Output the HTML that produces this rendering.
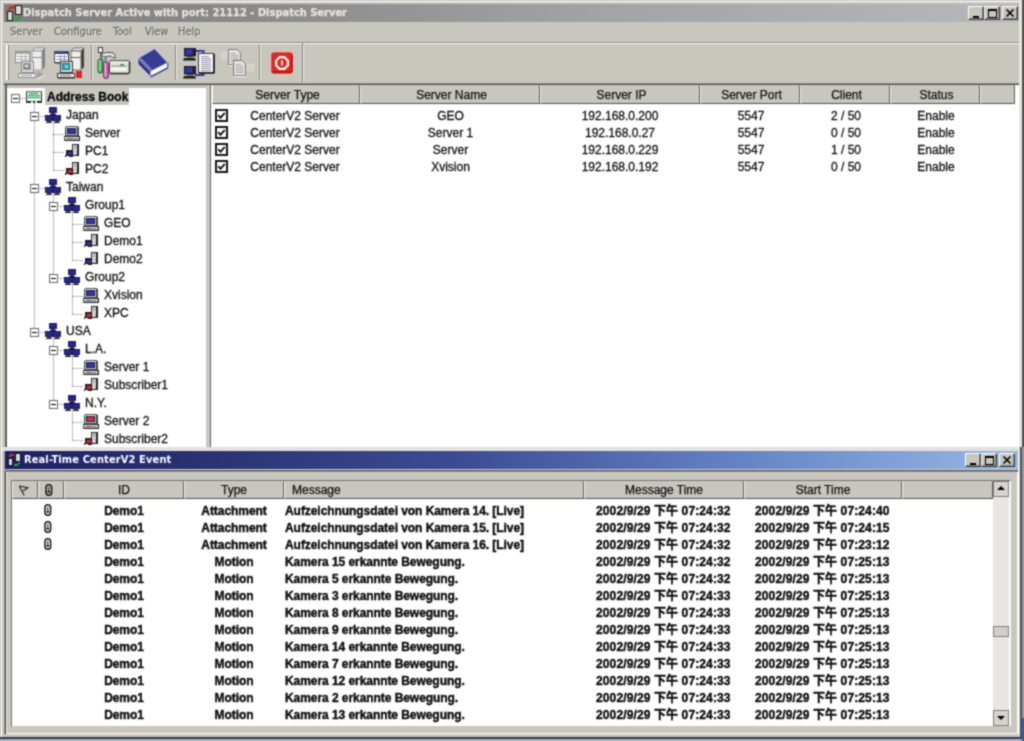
<!DOCTYPE html>
<html lang="en"><head><meta charset="utf-8"><title>Dispatch Server</title>
<style>
html,body{margin:0;padding:0}
body{width:1024px;height:741px;overflow:hidden;background:#c9c6be;font-family:"Liberation Sans",sans-serif;font-size:12px;color:#101010}
#win{position:absolute;left:0;top:0;width:1024px;height:741px;overflow:hidden;background:#c9c6be;filter:url(#soft)}
#win *{position:absolute}
#frame1{left:1px;top:1px;width:1019px;height:1px;background:#fff}
#frame2{left:1px;top:1px;width:1px;height:736px;background:#fff}
.ic{display:block;shape-rendering:crispEdges}
#title{left:4px;top:4px;width:1015px;height:18px;background:linear-gradient(90deg,#7e7e7e 0%,#8a8a8a 25%,#a2a3a5 58%,#b6b8bb 100%)}
#ttext{left:19px;top:1px;font:bold 11px "DejaVu Sans Condensed","DejaVu Sans","Liberation Sans",sans-serif;color:#e6e4de;-webkit-text-stroke:0.25px #e6e4de;white-space:nowrap;line-height:16px}
.wb{width:14px;height:12px;background:#c9c6be;border:1px solid;border-color:#fff #404040 #404040 #fff;box-shadow:inset -1px -1px 0 #808080}
.wb i{background:#000}
#menu{left:0;top:22px;width:1020px;height:19px}
#menu span{-webkit-text-stroke:0.3px #70706e;text-shadow:1px 1px 0 rgba(255,255,255,.55);top:3px;font:11px "DejaVu Sans Condensed","Liberation Sans",sans-serif;color:#70706e;white-space:nowrap;line-height:14px}
#msep{left:3px;top:41px;width:1016px;height:1px;background:#808080;border-bottom:1px solid #fff}
#treep{left:5px;top:85px;width:201px;height:362px;background:#fff;box-sizing:border-box;border:solid;border-width:0 0 0 2px;border-color:#505050 #fff #fff #606060;box-shadow:inset 0 3px 0 #c4c1ba}
#listp{left:210px;top:85px;width:809px;height:362px;background:#fff;box-sizing:border-box;border:solid;border-width:0 0 0 1px;border-color:#505050 #fff #fff #606060}
.vl{width:1px;background:repeating-linear-gradient(180deg,#7c7c7c 0 1px,#fff 1px 2px)}
.hl{height:1px;background:repeating-linear-gradient(90deg,#7c7c7c 0 1px,#fff 1px 2px)}
.bx{width:7px;height:7px;border:1px solid #686868;background:#fff}
.bx s{left:1px;top:3px;width:5px;height:1px;background:#000}
.sel{background:#c9c6be}
.tt{-webkit-text-stroke:0.3px #101010;white-space:nowrap;line-height:14px;font-size:12px;color:#101010}
.tb{font-weight:bold;color:#000}
.hd{-webkit-text-stroke:0.25px #101010;box-sizing:border-box;background:#c9c6be;border:1px solid;border-color:#cfccc5 #5c5c5c #505050 #f4f4f0;text-align:center;line-height:17px;font-size:12px;color:#101010;white-space:nowrap}
.lc{-webkit-text-stroke:0.3px #101010;text-align:center;line-height:16px;font-size:12px;white-space:nowrap;color:#101010}
#win2{left:4px;top:451px;width:1015px;height:285px;background:#c9c6be;box-sizing:border-box;border-left:1px solid #9a9894;border-bottom:2px solid #c9c6be;box-shadow:inset 1px 0 0 #404040,inset 2px 0 0 #f0f0ec,inset -2px -1px 0 #fafaf8}
#strip{left:2px;top:447px;width:1018px;height:4px;background:#e4e2dc}
#title2{left:5px;top:451px;width:1013px;height:18px;background:linear-gradient(90deg,#1c2068 0%,#2c3474 22%,#3c4c94 45%,#6888c8 75%,#98b8e4 100%);box-shadow:0 1px 0 #d0d0dc,0 2px 0 #585858,0 3px 0 #8c8a84}
#ttext2{letter-spacing:0.12px;left:19px;top:1px;font:bold 11px "DejaVu Sans Condensed","DejaVu Sans","Liberation Sans",sans-serif;color:#fff;white-space:nowrap;line-height:16px}
#evp{left:11px;top:480px;width:1000px;height:247px;background:#fff;box-sizing:border-box;border:1px solid;border-color:#707070 #f4f4f0 #c9c6be #707070}
.ec{-webkit-text-stroke:0.4px #0c0c0c;letter-spacing:-0.06px;text-align:center;line-height:16px;font-size:12px;font-weight:bold;white-space:nowrap;color:#0c0c0c}
.el{text-align:left}
.dt{letter-spacing:0.12px;font-family:"Liberation Sans","Noto Sans CJK TC",sans-serif}
#sb{left:993px;top:481px;width:16px;height:245px;background:#e8e6e2}
.sbb{left:0;width:14px;height:14px;background:#d6d4ce;border:1px solid #808080}
.sbt{left:0;top:145px;width:14px;height:9px;background:#d0cec8;border:1px solid #808080}
.up{left:3px;top:4px;width:0;height:0;border:4px solid transparent;border-top:0;border-bottom:4px solid #000}
.dn{left:3px;top:5px;width:0;height:0;border:4px solid transparent;border-bottom:0;border-top:4px solid #000}
.tsep{top:45px;width:1px;height:35px;background:#868480;border-right:1px solid #eeede9}
.ti{display:block}

#redge{left:1019px;top:0;width:5px;height:447px;background:linear-gradient(90deg,#e8e6e0 0 3px,#505050 3px 5px)}
#redge3{left:1019px;top:447px;width:5px;height:290px;background:linear-gradient(90deg,#dcdad4 0 1px,#505058 1px 3px,#9a9a9a 3px 5px)}
#redge2{left:1022px;top:718px;width:2px;height:23px;background:#3a5c98}
#bedge{left:0;top:737px;width:1022px;height:4px;background:linear-gradient(180deg,#2c3c54 0 2px,#a8b4c8 2px 4px)}

</style></head>
<body>
<svg width="0" height="0" style="position:absolute"><filter id="soft" x="0" y="0" width="100%" height="100%" color-interpolation-filters="sRGB"><feConvolveMatrix order="3" kernelMatrix="1 2 1 2 7 2 1 2 1" divisor="19" edgeMode="duplicate" preserveAlpha="true"/></filter></svg>
<div id="win">
<div id="frame1"></div><div id="frame2"></div>
<div id="title"><span id="ttext">Dispatch Server Active with port: 21112 - Dispatch Server</span></div>
<svg class="ic" style="left:6px;top:5px" width="17" height="16" viewBox="0 0 17 16"><rect x="1" y="6" width="6" height="10" fill="#181818"/><rect x="2" y="7" width="4" height="8" fill="#d8d8d8"/><rect x="9" y="0" width="7" height="10" fill="#181818"/><rect x="10" y="1" width="5" height="8" fill="#d8d8d8"/><path d="M2.500 5 L5 2.500 L8.500 2.500" stroke="#c83030" stroke-width="2.600" fill="none"/><path d="M8 14.200 L12 14.200 L15 11.200" stroke="#30a040" stroke-width="2.600" fill="none"/></svg>
<span class="wb" style="left:968px;top:6px"><i style="left:4px;top:9px;width:6px;height:2px"></i></span>
<span class="wb" style="left:984px;top:6px"><i style="left:3px;top:2px;width:9px;height:9px;background:none;border:1px solid #000;border-top-width:2px;box-sizing:border-box"></i></span>
<span class="wb" style="left:1002px;top:6px"><svg width="16" height="14" viewBox="0 0 16 14" style="position:absolute;left:-1px;top:-1px"><path d="M4.5 3.5 L11.5 10.5 M11.5 3.5 L4.5 10.5" stroke="#000" stroke-width="1.7"/></svg></span>
<div id="menu"><span style="left:10px">Server</span><span style="left:54px">Configure</span><span style="left:113px">Tool</span><span style="left:145px">View</span><span style="left:178px">Help</span></div>
<div id="tbtop" style="left:3px;top:42px;width:1016px;height:1px;background:#8c8a86"></div>
<div id="tbtop2" style="left:3px;top:43px;width:1016px;height:1px;background:#fff"></div>
<div id="tbbot" style="left:4px;top:83px;width:1016px;height:2px;background:linear-gradient(180deg,#8c8a86 0 1px,#4c4c4c 1px 2px)"></div>
<div id="grip" style="left:6px;top:45px;width:2px;height:35px;background:#fff;border-right:1px solid #808080"></div>
<i class="tsep" style="left:91px"></i><i class="tsep" style="left:175px"></i><i class="tsep" style="left:259px"></i>
<i class="tsep" style="left:302px;top:43px;height:39px"></i>
<!-- icon 1 : start service (disabled) -->
<svg class="ti" style="left:14px;top:47px" width="34" height="32" viewBox="0 0 34 32">
<polygon points="18,4 21,1 31,1 28,4" fill="#e8e8e8" stroke="#909090" stroke-width="1"/>
<polygon points="28,4 31,1 31,20 28,23" fill="#808080"/>
<rect x="18" y="4" width="10" height="19" fill="#ececec" stroke="#9c9c9c"/>
<path d="M18 10.5 H28" stroke="#909090"/>
<rect x="1.500" y="4.500" width="14" height="11" fill="#f4f4f4" stroke="#8c8c8c"/>
<rect x="2" y="5" width="13" height="2" fill="#a8a8a8"/>
<path d="M3 9.500 H14 M3 12.500 H14 M7.500 8 V14 M11.500 8 V14" stroke="#b0b0b0"/>
<rect x="7.500" y="14.500" width="12" height="11" fill="#e0e0e0" stroke="#8c8c8c"/>
<rect x="9" y="16" width="8" height="7" fill="#909090"/><rect x="11" y="18" width="3" height="2" fill="#e8e8e8"/>
<rect x="4.500" y="26.500" width="17" height="4" fill="#f0f0f0" stroke="#909090"/>
<path d="M7 28.500 H18" stroke="#a0a0a0"/>
<polygon points="23,24 31,28 23,32" fill="#a0a0a0"/><path d="M23 32 L31 28" stroke="#fff"/>
</svg>
<!-- icon 2 : stop service -->
<svg class="ti" style="left:53px;top:47px" width="34" height="32" viewBox="0 0 34 32">
<polygon points="18,4 21,1 31,1 28,4" fill="#f0f0f0" stroke="#707070" stroke-width="1"/>
<polygon points="28,4 31,1 31,20 28,23" fill="#404040"/>
<rect x="18" y="4" width="10" height="19" fill="#f0f0ec" stroke="#707070"/>
<path d="M18 10.500 H28" stroke="#606060"/>
<rect x="1.500" y="4.500" width="14" height="11" fill="#fff" stroke="#505050"/>
<rect x="2" y="5" width="13" height="2" fill="#3c3c9c"/>
<path d="M3 9.500 H14 M3 12.500 H14 M7.500 8 V14 M11.500 8 V14" stroke="#9090a0"/>
<path d="M15.500 5 V16 M2 16 H8" stroke="#303030"/>
<rect x="7.500" y="14.500" width="12" height="11" fill="#d8d8d8" stroke="#404040"/>
<rect x="9" y="16" width="8" height="7" fill="#187888"/><rect x="10" y="17" width="6" height="5" fill="#38a8b8"/><rect x="12" y="18" width="3" height="3" fill="#80d0dc"/>
<rect x="4.500" y="26.500" width="17" height="4" fill="#f0f0f0" stroke="#404040"/>
<path d="M7 28.500 H18" stroke="#808080"/><path d="M5 31 H22" stroke="#202020"/>
<rect x="23" y="24" width="6" height="7" fill="#e82020"/>
</svg>
<!-- icon 3 : tools -->
<svg class="ti" style="left:97px;top:47px" width="34" height="32" viewBox="0 0 34 32">
<rect x="12.500" y="13.500" width="20" height="13" rx="1.500" fill="#e4e4e0" stroke="#505050"/>
<path d="M13 26.500 H32 M32.500 15 V26" stroke="#282828" stroke-width="1.500"/>
<rect x="14" y="18" width="16" height="2" fill="#b8b8b8"/><rect x="14" y="21" width="16" height="2" fill="#f8f8f8"/>
<rect x="23" y="17" width="4" height="2" fill="#38a860"/>
<rect x="1.500" y="0.500" width="4" height="5" fill="#f8f8f8" stroke="#404040"/>
<rect x="3" y="6" width="2" height="6" fill="#707070"/>
<rect x="1" y="12" width="5" height="14" rx="2" fill="#48a868" stroke="#286038" stroke-width="1"/>
<rect x="2" y="13" width="1.500" height="11" fill="#a0e0b0"/>
<path d="M4 8 Q6 5.500 10 5.500 L15 5.500 Q18.500 6.500 18.500 11 L16 11 Q15 8.500 12 9 L7 10 Z" fill="#e8e8e8" stroke="#505050"/>
<rect x="7" y="10" width="3" height="6" fill="#909090"/>
<rect x="6.500" y="15" width="5" height="16.500" rx="2.200" fill="#c868b0" stroke="#703060" stroke-width="1"/>
<rect x="7.500" y="16" width="1.500" height="13" fill="#f0b0e0"/>
</svg>
<!-- icon 4 : address book -->
<svg class="ti" style="left:136px;top:47px" width="34" height="32" viewBox="0 0 34 32">
<polygon points="2,11.300 18.600,1.600 31.800,15.700 14.600,24.400" fill="#363c94" stroke="#e4e4f0" stroke-width="0.800"/>
<polygon points="2,11.300 14.600,24.400 14.600,29.800 2,17" fill="#30348c" stroke="#dcdcec" stroke-width="0.600"/>
<path d="M4 10.800 L15.500 22.600" stroke="#c8c8f0" stroke-width="1"/>
<polygon points="14.800,24.400 31.800,16 31.800,20.500 15.800,29" fill="#fcfcfc"/>
<path d="M14.600,29.800 L31.800,20.800" stroke="#30348c" stroke-width="1.400"/>
<path d="M31.800 15.700 V21" stroke="#30348c" stroke-width="1"/>
</svg>
<!-- icon 5 : connect -->
<svg class="ti" style="left:182px;top:47px" width="34" height="32" viewBox="0 0 34 32">
<path d="M13 4 H21.500 V8 M13 28 H21.500 V25" stroke="#3838a4" stroke-width="2" fill="none"/>
<rect x="2" y="1" width="12" height="8.500" fill="#20202c"/><rect x="3.500" y="2.200" width="7" height="5.600" fill="#3038a4"/>
<rect x="5" y="9" width="6" height="1.500" fill="#404040"/><polygon points="2,11 13,11 14,13.500 1,13.500" fill="#181818"/>
<rect x="2" y="19" width="12" height="8.500" fill="#20202c"/><rect x="3.500" y="20.200" width="7" height="5.600" fill="#3038a4"/>
<rect x="5" y="27" width="6" height="1.500" fill="#404040"/><polygon points="2,29 13,29 14,31.500 1,31.500" fill="#181818"/>
<rect x="16.500" y="6.500" width="15" height="19" fill="#fafafa" stroke="#404040"/>
<path d="M17 26 H32.500 M32 7 V26" stroke="#181818" stroke-width="1.600"/>
<path d="M19 9.500 H27 M19 11.500 H29 M19 13.500 H29 M19 15.500 H29 M19 17.500 H29 M19 19.500 H29 M19 21.500 H29 M19 23.500 H29" stroke="#9098a8"/>
</svg>
<!-- icon 6 : copy (disabled) -->
<svg class="ti" style="left:221px;top:47px" width="34" height="32" viewBox="0 0 34 32">
<path d="M0.500 5.500 H7 M0.500 7.500 H7 M0.500 9.500 H7 M0.500 11.500 H7" stroke="#f4f4f4" stroke-dasharray="1 1"/>
<path d="M26 17.500 H33 M26 19.500 H33 M26 21.500 H33 M26 23.500 H33" stroke="#f4f4f4" stroke-dasharray="1 1"/>
<polygon points="7.500,2.500 16,2.500 19.500,6 19.500,17.500 7.500,17.500" fill="#e4e4e0" stroke="#7c7c7c"/>
<path d="M9.500 6.500 H15 M9.500 8.500 H17.500 M9.500 10.500 H17.500 M9.500 12.500 H17.500 M9.500 14.500 H17.500" stroke="#a8a8a8"/>
<polygon points="12.500,13.500 21,13.500 24.500,17 24.500,28.500 12.500,28.500" fill="#e4e4e0" stroke="#7c7c7c"/>
<path d="M14.500 17.500 H20 M14.500 19.500 H22.500 M14.500 21.500 H22.500 M14.500 23.500 H22.500 M14.500 25.500 H22.500" stroke="#a8a8a8"/>
<path d="M8 18.500 H12 M13 29.500 H25" stroke="#f8f8f8"/>
</svg>
<!-- icon 7 : exit -->
<svg class="ti" style="left:270px;top:51px" width="24" height="24" viewBox="0 0 24 24">
<rect x="0.500" y="0.500" width="23" height="23" rx="3.500" fill="#f4c8c0"/>
<rect x="1.200" y="1.200" width="21.600" height="21.600" rx="2.800" fill="#e02820"/>
<path d="M2 21 H21 Q22 21 22 20 V4" stroke="#a81810" stroke-width="1.400" fill="none"/>
<polygon points="9.200,5 14.800,5 19,9.200 19,14.800 14.800,19 9.200,19 5,14.800 5,9.200" fill="#fff"/>
<polygon points="10,7.200 14,7.200 16.800,10 16.800,14 14,16.800 10,16.800 7.200,14 7.200,10" fill="#e02820"/>
<rect x="11.200" y="9.400" width="1.600" height="5" fill="#fff"/>
</svg>

<div id="treep"></div>
<i class="hl" style="left:20px;top:98px;width:6px"></i>
<i class="vl" style="left:34px;top:103px;height:229px"></i>
<b class="bx" style="left:11px;top:94px"><s></s></b>
<span class="sel" style="left:45px;top:88px;width:84px;height:17px"></span>
<svg class="ic" style="left:26px;top:91px" width="16" height="12" viewBox="0 0 16 12" ><rect x="0" y="0" width="16" height="12" fill="#303030"/><rect x="0" y="0" width="16" height="1" fill="#686868"/><rect x="1" y="1" width="14" height="9" fill="#d0f4d8"/><rect x="3" y="2" width="9" height="1" fill="#2c8c48"/><rect x="2" y="4" width="12" height="1" fill="#2c9c50"/><rect x="2" y="6" width="12" height="1" fill="#2c9c50"/><rect x="2" y="8" width="5" height="1" fill="#fff"/><rect x="9" y="8" width="4" height="1" fill="#fff"/><rect x="5" y="10" width="2" height="2" fill="#fff"/><rect x="9" y="10" width="2" height="2" fill="#fff"/><rect x="5" y="10" width="2" height="1" fill="#c0c0c0"/><rect x="9" y="10" width="2" height="1" fill="#c0c0c0"/></svg>
<span class="tt tb" style="left:47px;top:90px">Address Book</span>
<i class="hl" style="left:34px;top:116px;width:11px"></i>
<i class="vl" style="left:53px;top:121px;height:49px"></i>
<b class="bx" style="left:30px;top:112px"><s></s></b>
<svg class="ic" style="left:45px;top:107px" width="16" height="16" viewBox="0 0 16 16" ><rect x="7" y="7" width="1" height="2" fill="#606060"/><rect x="3" y="8" width="10" height="1" fill="#606060"/><rect x="4" y="0" width="8" height="6" fill="#1c1c60"/><rect x="5" y="1" width="6" height="4" fill="#28288c"/><rect x="6" y="6" width="4" height="1" fill="#404040"/><rect x="5" y="7" width="6" height="1" fill="#202020"/><rect x="0" y="8" width="8" height="6" fill="#1c1c60"/><rect x="1" y="9" width="6" height="4" fill="#28288c"/><rect x="2" y="14" width="4" height="1" fill="#404040"/><rect x="1" y="15" width="6" height="1" fill="#202020"/><rect x="8" y="8" width="8" height="6" fill="#1c1c60"/><rect x="9" y="9" width="6" height="4" fill="#28288c"/><rect x="10" y="14" width="4" height="1" fill="#404040"/><rect x="9" y="15" width="6" height="1" fill="#202020"/></svg>
<span class="tt" style="left:66px;top:108px">Japan</span>
<i class="hl" style="left:53px;top:134px;width:11px"></i>
<svg class="ic" style="left:64px;top:126px" width="16" height="15" viewBox="0 0 16 15" ><rect x="2" y="0" width="12" height="1" fill="#505050"/><rect x="1" y="1" width="14" height="9" fill="#484848"/><rect x="2" y="1" width="11" height="8" fill="#c4c4c4"/><rect x="3" y="1" width="9" height="1" fill="#f0f0f0"/><rect x="3" y="2" width="9" height="6" fill="#202050"/><rect x="4" y="3" width="7" height="4" fill="#3434a4"/><rect x="0" y="10" width="16" height="1" fill="#303030"/><rect x="0" y="11" width="16" height="3" fill="#b4b4b4"/><rect x="1" y="11" width="13" height="1" fill="#ececec"/><rect x="0" y="14" width="16" height="1" fill="#202020"/><rect x="15" y="10" width="1" height="5" fill="#202020"/><rect x="0" y="10" width="1" height="5" fill="#505050"/><rect x="3" y="12" width="6" height="1" fill="#505050"/><rect x="10" y="12" width="3" height="1" fill="#6868c0"/></svg>
<span class="tt" style="left:85px;top:126px">Server</span>
<i class="hl" style="left:53px;top:152px;width:11px"></i>
<svg class="ic" style="left:65px;top:144px" width="14" height="14" viewBox="0 0 14 14" ><rect x="7" y="0" width="7" height="12" fill="#282828"/><rect x="8" y="1" width="4" height="10" fill="#dcdcdc"/><rect x="9" y="2" width="2" height="1" fill="#707070"/><rect x="9" y="4" width="2" height="1" fill="#909090"/><rect x="8" y="7" width="4" height="4" fill="#b8b8b8"/><rect x="9" y="8" width="2" height="2" fill="#e8e8e8"/><rect x="1" y="6" width="7" height="6" fill="#202028"/><rect x="0" y="11" width="8" height="2" fill="#202028"/><rect x="2" y="7" width="5" height="4" fill="#181840"/><rect x="3" y="8" width="4" height="3" fill="#3030a0"/><rect x="1" y="12" width="3" height="1" fill="#f0f0f0"/></svg>
<span class="tt" style="left:85px;top:144px">PC1</span>
<i class="hl" style="left:53px;top:170px;width:11px"></i>
<svg class="ic" style="left:65px;top:162px" width="14" height="14" viewBox="0 0 14 14" ><rect x="7" y="0" width="7" height="12" fill="#282828"/><rect x="8" y="1" width="4" height="10" fill="#dcdcdc"/><rect x="9" y="2" width="2" height="1" fill="#707070"/><rect x="9" y="4" width="2" height="1" fill="#909090"/><rect x="8" y="7" width="4" height="4" fill="#b8b8b8"/><rect x="9" y="8" width="2" height="2" fill="#e8e8e8"/><rect x="1" y="6" width="7" height="6" fill="#202028"/><rect x="0" y="11" width="8" height="2" fill="#202028"/><rect x="2" y="7" width="5" height="4" fill="#601818"/><rect x="3" y="8" width="4" height="3" fill="#d02828"/><rect x="1" y="12" width="3" height="1" fill="#f0f0f0"/></svg>
<span class="tt" style="left:85px;top:162px">PC2</span>
<i class="hl" style="left:34px;top:188px;width:11px"></i>
<i class="vl" style="left:53px;top:193px;height:85px"></i>
<b class="bx" style="left:30px;top:184px"><s></s></b>
<svg class="ic" style="left:45px;top:179px" width="16" height="16" viewBox="0 0 16 16" ><rect x="7" y="7" width="1" height="2" fill="#606060"/><rect x="3" y="8" width="10" height="1" fill="#606060"/><rect x="4" y="0" width="8" height="6" fill="#1c1c60"/><rect x="5" y="1" width="6" height="4" fill="#28288c"/><rect x="6" y="6" width="4" height="1" fill="#404040"/><rect x="5" y="7" width="6" height="1" fill="#202020"/><rect x="0" y="8" width="8" height="6" fill="#1c1c60"/><rect x="1" y="9" width="6" height="4" fill="#28288c"/><rect x="2" y="14" width="4" height="1" fill="#404040"/><rect x="1" y="15" width="6" height="1" fill="#202020"/><rect x="8" y="8" width="8" height="6" fill="#1c1c60"/><rect x="9" y="9" width="6" height="4" fill="#28288c"/><rect x="10" y="14" width="4" height="1" fill="#404040"/><rect x="9" y="15" width="6" height="1" fill="#202020"/></svg>
<span class="tt" style="left:66px;top:180px">Taiwan</span>
<i class="hl" style="left:53px;top:206px;width:11px"></i>
<i class="vl" style="left:72px;top:211px;height:49px"></i>
<b class="bx" style="left:49px;top:202px"><s></s></b>
<svg class="ic" style="left:64px;top:197px" width="16" height="16" viewBox="0 0 16 16" ><rect x="7" y="7" width="1" height="2" fill="#606060"/><rect x="3" y="8" width="10" height="1" fill="#606060"/><rect x="4" y="0" width="8" height="6" fill="#1c1c60"/><rect x="5" y="1" width="6" height="4" fill="#28288c"/><rect x="6" y="6" width="4" height="1" fill="#404040"/><rect x="5" y="7" width="6" height="1" fill="#202020"/><rect x="0" y="8" width="8" height="6" fill="#1c1c60"/><rect x="1" y="9" width="6" height="4" fill="#28288c"/><rect x="2" y="14" width="4" height="1" fill="#404040"/><rect x="1" y="15" width="6" height="1" fill="#202020"/><rect x="8" y="8" width="8" height="6" fill="#1c1c60"/><rect x="9" y="9" width="6" height="4" fill="#28288c"/><rect x="10" y="14" width="4" height="1" fill="#404040"/><rect x="9" y="15" width="6" height="1" fill="#202020"/></svg>
<span class="tt" style="left:85px;top:198px">Group1</span>
<i class="hl" style="left:72px;top:224px;width:11px"></i>
<svg class="ic" style="left:83px;top:216px" width="16" height="15" viewBox="0 0 16 15" ><rect x="2" y="0" width="12" height="1" fill="#505050"/><rect x="1" y="1" width="14" height="9" fill="#484848"/><rect x="2" y="1" width="11" height="8" fill="#c4c4c4"/><rect x="3" y="1" width="9" height="1" fill="#f0f0f0"/><rect x="3" y="2" width="9" height="6" fill="#202050"/><rect x="4" y="3" width="7" height="4" fill="#3434a4"/><rect x="0" y="10" width="16" height="1" fill="#303030"/><rect x="0" y="11" width="16" height="3" fill="#b4b4b4"/><rect x="1" y="11" width="13" height="1" fill="#ececec"/><rect x="0" y="14" width="16" height="1" fill="#202020"/><rect x="15" y="10" width="1" height="5" fill="#202020"/><rect x="0" y="10" width="1" height="5" fill="#505050"/><rect x="3" y="12" width="6" height="1" fill="#505050"/><rect x="10" y="12" width="3" height="1" fill="#6868c0"/></svg>
<span class="tt" style="left:104px;top:216px">GEO</span>
<i class="hl" style="left:72px;top:242px;width:11px"></i>
<svg class="ic" style="left:84px;top:234px" width="14" height="14" viewBox="0 0 14 14" ><rect x="7" y="0" width="7" height="12" fill="#282828"/><rect x="8" y="1" width="4" height="10" fill="#dcdcdc"/><rect x="9" y="2" width="2" height="1" fill="#707070"/><rect x="9" y="4" width="2" height="1" fill="#909090"/><rect x="8" y="7" width="4" height="4" fill="#b8b8b8"/><rect x="9" y="8" width="2" height="2" fill="#e8e8e8"/><rect x="1" y="6" width="7" height="6" fill="#202028"/><rect x="0" y="11" width="8" height="2" fill="#202028"/><rect x="2" y="7" width="5" height="4" fill="#181840"/><rect x="3" y="8" width="4" height="3" fill="#3030a0"/><rect x="1" y="12" width="3" height="1" fill="#f0f0f0"/></svg>
<span class="tt" style="left:104px;top:234px">Demo1</span>
<i class="hl" style="left:72px;top:260px;width:11px"></i>
<svg class="ic" style="left:84px;top:252px" width="14" height="14" viewBox="0 0 14 14" ><rect x="7" y="0" width="7" height="12" fill="#282828"/><rect x="8" y="1" width="4" height="10" fill="#dcdcdc"/><rect x="9" y="2" width="2" height="1" fill="#707070"/><rect x="9" y="4" width="2" height="1" fill="#909090"/><rect x="8" y="7" width="4" height="4" fill="#b8b8b8"/><rect x="9" y="8" width="2" height="2" fill="#e8e8e8"/><rect x="1" y="6" width="7" height="6" fill="#202028"/><rect x="0" y="11" width="8" height="2" fill="#202028"/><rect x="2" y="7" width="5" height="4" fill="#181840"/><rect x="3" y="8" width="4" height="3" fill="#3030a0"/><rect x="1" y="12" width="3" height="1" fill="#f0f0f0"/></svg>
<span class="tt" style="left:104px;top:252px">Demo2</span>
<i class="hl" style="left:53px;top:278px;width:11px"></i>
<i class="vl" style="left:72px;top:283px;height:31px"></i>
<b class="bx" style="left:49px;top:274px"><s></s></b>
<svg class="ic" style="left:64px;top:269px" width="16" height="16" viewBox="0 0 16 16" ><rect x="7" y="7" width="1" height="2" fill="#606060"/><rect x="3" y="8" width="10" height="1" fill="#606060"/><rect x="4" y="0" width="8" height="6" fill="#1c1c60"/><rect x="5" y="1" width="6" height="4" fill="#28288c"/><rect x="6" y="6" width="4" height="1" fill="#404040"/><rect x="5" y="7" width="6" height="1" fill="#202020"/><rect x="0" y="8" width="8" height="6" fill="#1c1c60"/><rect x="1" y="9" width="6" height="4" fill="#28288c"/><rect x="2" y="14" width="4" height="1" fill="#404040"/><rect x="1" y="15" width="6" height="1" fill="#202020"/><rect x="8" y="8" width="8" height="6" fill="#1c1c60"/><rect x="9" y="9" width="6" height="4" fill="#28288c"/><rect x="10" y="14" width="4" height="1" fill="#404040"/><rect x="9" y="15" width="6" height="1" fill="#202020"/></svg>
<span class="tt" style="left:85px;top:270px">Group2</span>
<i class="hl" style="left:72px;top:296px;width:11px"></i>
<svg class="ic" style="left:83px;top:288px" width="16" height="15" viewBox="0 0 16 15" ><rect x="2" y="0" width="12" height="1" fill="#505050"/><rect x="1" y="1" width="14" height="9" fill="#484848"/><rect x="2" y="1" width="11" height="8" fill="#c4c4c4"/><rect x="3" y="1" width="9" height="1" fill="#f0f0f0"/><rect x="3" y="2" width="9" height="6" fill="#202050"/><rect x="4" y="3" width="7" height="4" fill="#3434a4"/><rect x="0" y="10" width="16" height="1" fill="#303030"/><rect x="0" y="11" width="16" height="3" fill="#b4b4b4"/><rect x="1" y="11" width="13" height="1" fill="#ececec"/><rect x="0" y="14" width="16" height="1" fill="#202020"/><rect x="15" y="10" width="1" height="5" fill="#202020"/><rect x="0" y="10" width="1" height="5" fill="#505050"/><rect x="3" y="12" width="6" height="1" fill="#505050"/><rect x="10" y="12" width="3" height="1" fill="#6868c0"/></svg>
<span class="tt" style="left:104px;top:288px">Xvision</span>
<i class="hl" style="left:72px;top:314px;width:11px"></i>
<svg class="ic" style="left:84px;top:306px" width="14" height="14" viewBox="0 0 14 14" ><rect x="7" y="0" width="7" height="12" fill="#282828"/><rect x="8" y="1" width="4" height="10" fill="#dcdcdc"/><rect x="9" y="2" width="2" height="1" fill="#707070"/><rect x="9" y="4" width="2" height="1" fill="#909090"/><rect x="8" y="7" width="4" height="4" fill="#b8b8b8"/><rect x="9" y="8" width="2" height="2" fill="#e8e8e8"/><rect x="1" y="6" width="7" height="6" fill="#202028"/><rect x="0" y="11" width="8" height="2" fill="#202028"/><rect x="2" y="7" width="5" height="4" fill="#601818"/><rect x="3" y="8" width="4" height="3" fill="#d02828"/><rect x="1" y="12" width="3" height="1" fill="#f0f0f0"/></svg>
<span class="tt" style="left:104px;top:306px">XPC</span>
<i class="hl" style="left:34px;top:332px;width:11px"></i>
<i class="vl" style="left:53px;top:337px;height:67px"></i>
<b class="bx" style="left:30px;top:328px"><s></s></b>
<svg class="ic" style="left:45px;top:323px" width="16" height="16" viewBox="0 0 16 16" ><rect x="7" y="7" width="1" height="2" fill="#606060"/><rect x="3" y="8" width="10" height="1" fill="#606060"/><rect x="4" y="0" width="8" height="6" fill="#1c1c60"/><rect x="5" y="1" width="6" height="4" fill="#28288c"/><rect x="6" y="6" width="4" height="1" fill="#404040"/><rect x="5" y="7" width="6" height="1" fill="#202020"/><rect x="0" y="8" width="8" height="6" fill="#1c1c60"/><rect x="1" y="9" width="6" height="4" fill="#28288c"/><rect x="2" y="14" width="4" height="1" fill="#404040"/><rect x="1" y="15" width="6" height="1" fill="#202020"/><rect x="8" y="8" width="8" height="6" fill="#1c1c60"/><rect x="9" y="9" width="6" height="4" fill="#28288c"/><rect x="10" y="14" width="4" height="1" fill="#404040"/><rect x="9" y="15" width="6" height="1" fill="#202020"/></svg>
<span class="tt" style="left:66px;top:324px">USA</span>
<i class="hl" style="left:53px;top:350px;width:11px"></i>
<i class="vl" style="left:72px;top:355px;height:31px"></i>
<b class="bx" style="left:49px;top:346px"><s></s></b>
<svg class="ic" style="left:64px;top:341px" width="16" height="16" viewBox="0 0 16 16" ><rect x="7" y="7" width="1" height="2" fill="#606060"/><rect x="3" y="8" width="10" height="1" fill="#606060"/><rect x="4" y="0" width="8" height="6" fill="#1c1c60"/><rect x="5" y="1" width="6" height="4" fill="#28288c"/><rect x="6" y="6" width="4" height="1" fill="#404040"/><rect x="5" y="7" width="6" height="1" fill="#202020"/><rect x="0" y="8" width="8" height="6" fill="#1c1c60"/><rect x="1" y="9" width="6" height="4" fill="#28288c"/><rect x="2" y="14" width="4" height="1" fill="#404040"/><rect x="1" y="15" width="6" height="1" fill="#202020"/><rect x="8" y="8" width="8" height="6" fill="#1c1c60"/><rect x="9" y="9" width="6" height="4" fill="#28288c"/><rect x="10" y="14" width="4" height="1" fill="#404040"/><rect x="9" y="15" width="6" height="1" fill="#202020"/></svg>
<span class="tt" style="left:85px;top:342px">L.A.</span>
<i class="hl" style="left:72px;top:368px;width:11px"></i>
<svg class="ic" style="left:83px;top:360px" width="16" height="15" viewBox="0 0 16 15" ><rect x="2" y="0" width="12" height="1" fill="#505050"/><rect x="1" y="1" width="14" height="9" fill="#484848"/><rect x="2" y="1" width="11" height="8" fill="#c4c4c4"/><rect x="3" y="1" width="9" height="1" fill="#f0f0f0"/><rect x="3" y="2" width="9" height="6" fill="#202050"/><rect x="4" y="3" width="7" height="4" fill="#3434a4"/><rect x="0" y="10" width="16" height="1" fill="#303030"/><rect x="0" y="11" width="16" height="3" fill="#b4b4b4"/><rect x="1" y="11" width="13" height="1" fill="#ececec"/><rect x="0" y="14" width="16" height="1" fill="#202020"/><rect x="15" y="10" width="1" height="5" fill="#202020"/><rect x="0" y="10" width="1" height="5" fill="#505050"/><rect x="3" y="12" width="6" height="1" fill="#505050"/><rect x="10" y="12" width="3" height="1" fill="#6868c0"/></svg>
<span class="tt" style="left:104px;top:360px">Server 1</span>
<i class="hl" style="left:72px;top:386px;width:11px"></i>
<svg class="ic" style="left:84px;top:378px" width="14" height="14" viewBox="0 0 14 14" ><rect x="7" y="0" width="7" height="12" fill="#282828"/><rect x="8" y="1" width="4" height="10" fill="#dcdcdc"/><rect x="9" y="2" width="2" height="1" fill="#707070"/><rect x="9" y="4" width="2" height="1" fill="#909090"/><rect x="8" y="7" width="4" height="4" fill="#b8b8b8"/><rect x="9" y="8" width="2" height="2" fill="#e8e8e8"/><rect x="1" y="6" width="7" height="6" fill="#202028"/><rect x="0" y="11" width="8" height="2" fill="#202028"/><rect x="2" y="7" width="5" height="4" fill="#601818"/><rect x="3" y="8" width="4" height="3" fill="#d02828"/><rect x="1" y="12" width="3" height="1" fill="#f0f0f0"/></svg>
<span class="tt" style="left:104px;top:378px">Subscriber1</span>
<i class="hl" style="left:53px;top:404px;width:11px"></i>
<i class="vl" style="left:72px;top:409px;height:31px"></i>
<b class="bx" style="left:49px;top:400px"><s></s></b>
<svg class="ic" style="left:64px;top:395px" width="16" height="16" viewBox="0 0 16 16" ><rect x="7" y="7" width="1" height="2" fill="#606060"/><rect x="3" y="8" width="10" height="1" fill="#606060"/><rect x="4" y="0" width="8" height="6" fill="#1c1c60"/><rect x="5" y="1" width="6" height="4" fill="#28288c"/><rect x="6" y="6" width="4" height="1" fill="#404040"/><rect x="5" y="7" width="6" height="1" fill="#202020"/><rect x="0" y="8" width="8" height="6" fill="#1c1c60"/><rect x="1" y="9" width="6" height="4" fill="#28288c"/><rect x="2" y="14" width="4" height="1" fill="#404040"/><rect x="1" y="15" width="6" height="1" fill="#202020"/><rect x="8" y="8" width="8" height="6" fill="#1c1c60"/><rect x="9" y="9" width="6" height="4" fill="#28288c"/><rect x="10" y="14" width="4" height="1" fill="#404040"/><rect x="9" y="15" width="6" height="1" fill="#202020"/></svg>
<span class="tt" style="left:85px;top:396px">N.Y.</span>
<i class="hl" style="left:72px;top:422px;width:11px"></i>
<svg class="ic" style="left:83px;top:414px" width="16" height="15" viewBox="0 0 16 15" ><rect x="2" y="0" width="12" height="1" fill="#505050"/><rect x="1" y="1" width="14" height="9" fill="#484848"/><rect x="2" y="1" width="11" height="8" fill="#c4c4c4"/><rect x="3" y="1" width="9" height="1" fill="#f0f0f0"/><rect x="3" y="2" width="9" height="6" fill="#202050"/><rect x="4" y="3" width="7" height="4" fill="#d03030"/><rect x="0" y="10" width="16" height="1" fill="#303030"/><rect x="0" y="11" width="16" height="3" fill="#b4b4b4"/><rect x="1" y="11" width="13" height="1" fill="#ececec"/><rect x="0" y="14" width="16" height="1" fill="#202020"/><rect x="15" y="10" width="1" height="5" fill="#202020"/><rect x="0" y="10" width="1" height="5" fill="#505050"/><rect x="3" y="12" width="6" height="1" fill="#505050"/><rect x="10" y="12" width="3" height="1" fill="#6868c0"/></svg>
<span class="tt" style="left:104px;top:414px">Server 2</span>
<i class="hl" style="left:72px;top:440px;width:11px"></i>
<svg class="ic" style="left:84px;top:432px" width="14" height="14" viewBox="0 0 14 14" ><rect x="7" y="0" width="7" height="12" fill="#282828"/><rect x="8" y="1" width="4" height="10" fill="#dcdcdc"/><rect x="9" y="2" width="2" height="1" fill="#707070"/><rect x="9" y="4" width="2" height="1" fill="#909090"/><rect x="8" y="7" width="4" height="4" fill="#b8b8b8"/><rect x="9" y="8" width="2" height="2" fill="#e8e8e8"/><rect x="1" y="6" width="7" height="6" fill="#202028"/><rect x="0" y="11" width="8" height="2" fill="#202028"/><rect x="2" y="7" width="5" height="4" fill="#601818"/><rect x="3" y="8" width="4" height="3" fill="#d02828"/><rect x="1" y="12" width="3" height="1" fill="#f0f0f0"/></svg>
<span class="tt" style="left:104px;top:432px">Subscriber2</span>
<div id="listp"></div>
<div class="hd" style="left:212px;top:85px;width:148px;height:19px;line-height:19px;padding-left:3px">Server Type</div>
<div class="hd" style="left:360px;top:85px;width:180px;height:19px;line-height:19px;padding-left:3px">Server Name</div>
<div class="hd" style="left:540px;top:85px;width:160px;height:19px;line-height:19px;padding-left:3px">Server IP</div>
<div class="hd" style="left:700px;top:85px;width:100px;height:19px;line-height:19px;padding-left:3px">Server Port</div>
<div class="hd" style="left:800px;top:85px;width:90px;height:19px;line-height:19px;padding-left:3px">Client</div>
<div class="hd" style="left:890px;top:85px;width:90px;height:19px;line-height:19px;padding-left:3px">Status</div>
<div class="hd" style="left:980px;top:85px;width:35px;height:19px;line-height:19px;padding-left:3px"></div>
<svg class="ti" style="left:215px;top:109px" width="13" height="13" viewBox="0 0 13 13"><rect x="1" y="1" width="11" height="11" fill="#fff" stroke="#181818" stroke-width="2"/><path d="M3.2 6.2 L5.5 8.8 L9.8 3.8" stroke="#101010" stroke-width="1.8" fill="none"/></svg>
<span class="lc" style="left:235px;top:108px;width:120px">CenterV2 Server</span>
<span class="lc" style="left:390.5px;top:108px;width:120px">GEO</span>
<span class="lc" style="left:560px;top:108px;width:120px">192.168.0.200</span>
<span class="lc" style="left:691px;top:108px;width:120px">5547</span>
<span class="lc" style="left:786px;top:108px;width:120px">2 / 50</span>
<span class="lc" style="left:876px;top:108px;width:120px">Enable</span>
<svg class="ti" style="left:215px;top:126px" width="13" height="13" viewBox="0 0 13 13"><rect x="1" y="1" width="11" height="11" fill="#fff" stroke="#181818" stroke-width="2"/><path d="M3.2 6.2 L5.5 8.8 L9.8 3.8" stroke="#101010" stroke-width="1.8" fill="none"/></svg>
<span class="lc" style="left:235px;top:125px;width:120px">CenterV2 Server</span>
<span class="lc" style="left:390.5px;top:125px;width:120px">Server 1</span>
<span class="lc" style="left:560px;top:125px;width:120px">192.168.0.27</span>
<span class="lc" style="left:691px;top:125px;width:120px">5547</span>
<span class="lc" style="left:786px;top:125px;width:120px">0 / 50</span>
<span class="lc" style="left:876px;top:125px;width:120px">Enable</span>
<svg class="ti" style="left:215px;top:143px" width="13" height="13" viewBox="0 0 13 13"><rect x="1" y="1" width="11" height="11" fill="#fff" stroke="#181818" stroke-width="2"/><path d="M3.2 6.2 L5.5 8.8 L9.8 3.8" stroke="#101010" stroke-width="1.8" fill="none"/></svg>
<span class="lc" style="left:235px;top:142px;width:120px">CenterV2 Server</span>
<span class="lc" style="left:390.5px;top:142px;width:120px">Server</span>
<span class="lc" style="left:560px;top:142px;width:120px">192.168.0.229</span>
<span class="lc" style="left:691px;top:142px;width:120px">5547</span>
<span class="lc" style="left:786px;top:142px;width:120px">1 / 50</span>
<span class="lc" style="left:876px;top:142px;width:120px">Enable</span>
<svg class="ti" style="left:215px;top:160px" width="13" height="13" viewBox="0 0 13 13"><rect x="1" y="1" width="11" height="11" fill="#fff" stroke="#181818" stroke-width="2"/><path d="M3.2 6.2 L5.5 8.8 L9.8 3.8" stroke="#101010" stroke-width="1.8" fill="none"/></svg>
<span class="lc" style="left:235px;top:159px;width:120px">CenterV2 Server</span>
<span class="lc" style="left:390.5px;top:159px;width:120px">Xvision</span>
<span class="lc" style="left:560px;top:159px;width:120px">192.168.0.192</span>
<span class="lc" style="left:691px;top:159px;width:120px">5547</span>
<span class="lc" style="left:786px;top:159px;width:120px">0 / 50</span>
<span class="lc" style="left:876px;top:159px;width:120px">Enable</span>
<div id="strip"></div>
<div id="win2"></div>
<div id="title2"><span id="ttext2">Real-Time CenterV2 Event</span></div>
<svg class="ic" style="left:7px;top:453px" width="15" height="14" viewBox="0 0 15 14"><rect x="1" y="5" width="5" height="8" fill="#181818"/><rect x="2" y="6" width="3" height="6" fill="#d8d8d8"/><rect x="8" y="0" width="6" height="9" fill="#181818"/><rect x="9" y="1" width="4" height="7" fill="#d8d8d8"/><path d="M2 4 L4 2 L7 2" stroke="#d03030" stroke-width="1.6" fill="none"/><path d="M7 12 L10 12 L13 9.5" stroke="#30a040" stroke-width="1.6" fill="none"/></svg>
<span class="wb" style="left:965px;top:453px"><i style="left:4px;top:9px;width:6px;height:2px"></i></span>
<span class="wb" style="left:981px;top:453px"><i style="left:3px;top:2px;width:9px;height:9px;background:none;border:1px solid #000;border-top-width:2px;box-sizing:border-box"></i></span>
<span class="wb" style="left:999px;top:453px"><svg width="16" height="14" viewBox="0 0 16 14" style="position:absolute;left:-1px;top:-1px"><path d="M4.5 3.5 L11.5 10.5 M11.5 3.5 L4.5 10.5" stroke="#000" stroke-width="1.7"/></svg></span>
<div id="evp"></div>
<div class="hd" style="left:12px;top:481px;width:26px;height:18px"></div>
<div class="hd" style="left:38px;top:481px;width:26px;height:18px"></div>
<div class="hd" style="left:64px;top:481px;width:120px;height:18px">ID</div>
<div class="hd" style="left:184px;top:481px;width:100px;height:18px">Type</div>
<div class="hd" style="left:284px;top:481px;width:300px;height:18px;text-align:left;padding-left:7px;box-sizing:border-box">Message</div>
<div class="hd" style="left:584px;top:481px;width:160px;height:18px">Message Time</div>
<div class="hd" style="left:744px;top:481px;width:158px;height:18px">Start Time</div>
<div class="hd" style="left:902px;top:481px;width:91px;height:18px"></div>
<svg class="ti" style="left:18px;top:484px" width="12" height="13" viewBox="0 0 12 13"><path d="M1.3 2 L6.2 11.5 M1.3 2 L9.8 3.8 L5 7" stroke="#282828" stroke-width="1.2" fill="none"/></svg>
<svg class="ti" style="left:45px;top:484px" width="8" height="12" viewBox="0 0 8 12"><rect x="1" y="0.8" width="5.6" height="10.4" rx="2.8" fill="none" stroke="#141414" stroke-width="1.5"/><path d="M3.8 3 V7.6 M2.6 7.4 Q3.8 9.4 5 7.4" stroke="#141414" stroke-width="1.1" fill="none"/></svg>
<svg class="ti" style="left:44px;top:504px" width="8" height="12" viewBox="0 0 8 12"><rect x="1" y="0.8" width="5.6" height="10.4" rx="2.8" fill="none" stroke="#141414" stroke-width="1.5"/><path d="M3.8 3 V7.6 M2.6 7.4 Q3.8 9.4 5 7.4" stroke="#141414" stroke-width="1.1" fill="none"/></svg>
<span class="ec" style="left:64px;top:503px;width:120px">Demo1</span>
<span class="ec" style="left:184px;top:503px;width:100px">Attachment</span>
<span class="ec el" style="left:285px;top:503px">Aufzeichnungsdatei von Kamera 14. [Live]</span>
<span class="ec el dt" style="left:596px;top:503px">2002/9/29 下午 07:24:32</span>
<span class="ec el dt" style="left:755px;top:503px">2002/9/29 下午 07:24:40</span>
<svg class="ti" style="left:44px;top:521px" width="8" height="12" viewBox="0 0 8 12"><rect x="1" y="0.8" width="5.6" height="10.4" rx="2.8" fill="none" stroke="#141414" stroke-width="1.5"/><path d="M3.8 3 V7.6 M2.6 7.4 Q3.8 9.4 5 7.4" stroke="#141414" stroke-width="1.1" fill="none"/></svg>
<span class="ec" style="left:64px;top:520px;width:120px">Demo1</span>
<span class="ec" style="left:184px;top:520px;width:100px">Attachment</span>
<span class="ec el" style="left:285px;top:520px">Aufzeichnungsdatei von Kamera 15. [Live]</span>
<span class="ec el dt" style="left:596px;top:520px">2002/9/29 下午 07:24:32</span>
<span class="ec el dt" style="left:755px;top:520px">2002/9/29 下午 07:24:15</span>
<svg class="ti" style="left:44px;top:538px" width="8" height="12" viewBox="0 0 8 12"><rect x="1" y="0.8" width="5.6" height="10.4" rx="2.8" fill="none" stroke="#141414" stroke-width="1.5"/><path d="M3.8 3 V7.6 M2.6 7.4 Q3.8 9.4 5 7.4" stroke="#141414" stroke-width="1.1" fill="none"/></svg>
<span class="ec" style="left:64px;top:537px;width:120px">Demo1</span>
<span class="ec" style="left:184px;top:537px;width:100px">Attachment</span>
<span class="ec el" style="left:285px;top:537px">Aufzeichnungsdatei von Kamera 16. [Live]</span>
<span class="ec el dt" style="left:596px;top:537px">2002/9/29 下午 07:24:32</span>
<span class="ec el dt" style="left:755px;top:537px">2002/9/29 下午 07:23:12</span>
<span class="ec" style="left:64px;top:554px;width:120px">Demo1</span>
<span class="ec" style="left:184px;top:554px;width:100px">Motion</span>
<span class="ec el" style="left:285px;top:554px">Kamera 15 erkannte Bewegung.</span>
<span class="ec el dt" style="left:596px;top:554px">2002/9/29 下午 07:24:32</span>
<span class="ec el dt" style="left:755px;top:554px">2002/9/29 下午 07:25:13</span>
<span class="ec" style="left:64px;top:571px;width:120px">Demo1</span>
<span class="ec" style="left:184px;top:571px;width:100px">Motion</span>
<span class="ec el" style="left:285px;top:571px">Kamera 5 erkannte Bewegung.</span>
<span class="ec el dt" style="left:596px;top:571px">2002/9/29 下午 07:24:32</span>
<span class="ec el dt" style="left:755px;top:571px">2002/9/29 下午 07:25:13</span>
<span class="ec" style="left:64px;top:588px;width:120px">Demo1</span>
<span class="ec" style="left:184px;top:588px;width:100px">Motion</span>
<span class="ec el" style="left:285px;top:588px">Kamera 3 erkannte Bewegung.</span>
<span class="ec el dt" style="left:596px;top:588px">2002/9/29 下午 07:24:33</span>
<span class="ec el dt" style="left:755px;top:588px">2002/9/29 下午 07:25:13</span>
<span class="ec" style="left:64px;top:605px;width:120px">Demo1</span>
<span class="ec" style="left:184px;top:605px;width:100px">Motion</span>
<span class="ec el" style="left:285px;top:605px">Kamera 8 erkannte Bewegung.</span>
<span class="ec el dt" style="left:596px;top:605px">2002/9/29 下午 07:24:33</span>
<span class="ec el dt" style="left:755px;top:605px">2002/9/29 下午 07:25:13</span>
<span class="ec" style="left:64px;top:622px;width:120px">Demo1</span>
<span class="ec" style="left:184px;top:622px;width:100px">Motion</span>
<span class="ec el" style="left:285px;top:622px">Kamera 9 erkannte Bewegung.</span>
<span class="ec el dt" style="left:596px;top:622px">2002/9/29 下午 07:24:33</span>
<span class="ec el dt" style="left:755px;top:622px">2002/9/29 下午 07:25:13</span>
<span class="ec" style="left:64px;top:639px;width:120px">Demo1</span>
<span class="ec" style="left:184px;top:639px;width:100px">Motion</span>
<span class="ec el" style="left:285px;top:639px">Kamera 14 erkannte Bewegung.</span>
<span class="ec el dt" style="left:596px;top:639px">2002/9/29 下午 07:24:33</span>
<span class="ec el dt" style="left:755px;top:639px">2002/9/29 下午 07:25:13</span>
<span class="ec" style="left:64px;top:656px;width:120px">Demo1</span>
<span class="ec" style="left:184px;top:656px;width:100px">Motion</span>
<span class="ec el" style="left:285px;top:656px">Kamera 7 erkannte Bewegung.</span>
<span class="ec el dt" style="left:596px;top:656px">2002/9/29 下午 07:24:33</span>
<span class="ec el dt" style="left:755px;top:656px">2002/9/29 下午 07:25:13</span>
<span class="ec" style="left:64px;top:673px;width:120px">Demo1</span>
<span class="ec" style="left:184px;top:673px;width:100px">Motion</span>
<span class="ec el" style="left:285px;top:673px">Kamera 12 erkannte Bewegung.</span>
<span class="ec el dt" style="left:596px;top:673px">2002/9/29 下午 07:24:33</span>
<span class="ec el dt" style="left:755px;top:673px">2002/9/29 下午 07:25:13</span>
<span class="ec" style="left:64px;top:690px;width:120px">Demo1</span>
<span class="ec" style="left:184px;top:690px;width:100px">Motion</span>
<span class="ec el" style="left:285px;top:690px">Kamera 2 erkannte Bewegung.</span>
<span class="ec el dt" style="left:596px;top:690px">2002/9/29 下午 07:24:33</span>
<span class="ec el dt" style="left:755px;top:690px">2002/9/29 下午 07:25:13</span>
<span class="ec" style="left:64px;top:707px;width:120px">Demo1</span>
<span class="ec" style="left:184px;top:707px;width:100px">Motion</span>
<span class="ec el" style="left:285px;top:707px">Kamera 13 erkannte Bewegung.</span>
<span class="ec el dt" style="left:596px;top:707px">2002/9/29 下午 07:24:33</span>
<span class="ec el dt" style="left:755px;top:707px">2002/9/29 下午 07:25:13</span>
<div id="redge"></div><div id="redge3"></div><div id="redge2"></div><div id="bedge"></div>
<div id="sb"><span class="sbb" style="top:0"><i class="up"></i></span><span class="sbt"></span><span class="sbb" style="bottom:0"><i class="dn"></i></span></div>
</div>
</body></html>
